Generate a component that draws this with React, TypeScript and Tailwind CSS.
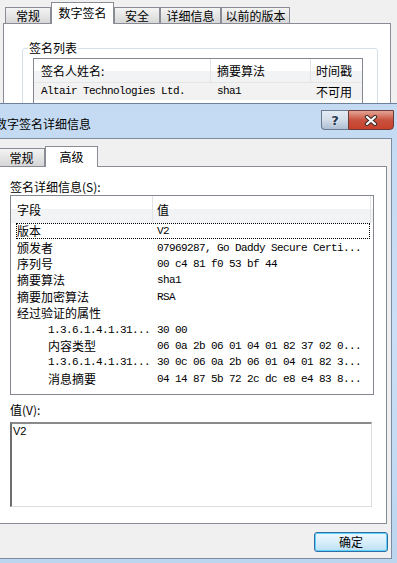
import React from "react";

const CJK = "font-['Noto_Sans_CJK_SC','Noto_Sans',sans-serif]";
const MONO = "font-['Liberation_Mono','Noto_Sans_CJK_SC',monospace] text-[11px] tracking-[-0.6px]";

function Tab({ w, label }: { w: string; label: string }) {
  return (
    <div
      className={`${w} h-[16px] border border-b-0 border-[#898c95] bg-linear-to-b from-[#f4f4f4] to-[#d8d8d8] flex items-center justify-center leading-[14px] text-[12px]`}
    >
      {label}
    </div>
  );
}

function SelTab({ w, label }: { w: string; label: string }) {
  return (
    <div
      className={`${w} relative z-10 -mb-px h-[22px] border border-b-0 border-[#898c95] bg-white flex items-start justify-center pt-[3px] leading-[14px] text-[12px]`}
    >
      {label}
    </div>
  );
}

type Row = { f: string; v: string; indent?: boolean; monoF?: boolean; sel?: boolean };

const rows: Row[] = [
  { f: "版本", v: "V2", sel: true },
  { f: "颁发者", v: "07969287, Go Daddy Secure Certi..." },
  { f: "序列号", v: "00 c4 81 f0 53 bf 44" },
  { f: "摘要算法", v: "sha1" },
  { f: "摘要加密算法", v: "RSA" },
  { f: "经过验证的属性", v: "" },
  { f: "1.3.6.1.4.1.31...", v: "30 00", indent: true, monoF: true },
  { f: "内容类型", v: "06 0a 2b 06 01 04 01 82 37 02 0...", indent: true },
  { f: "1.3.6.1.4.1.31...", v: "30 0c 06 0a 2b 06 01 04 01 82 3...", indent: true, monoF: true },
  { f: "消息摘要", v: "04 14 87 5b 72 2c dc e8 e4 83 8...", indent: true },
];

export default function App() {
  return (
    <div className={`relative w-[397px] h-[563px] overflow-hidden bg-[#f0f0f0] text-black ${CJK} text-[12px]`}>
      {/* Background property sheet */}
      <div className="pt-[2px]">
        <div className="flex items-end h-[21px] pl-[5px]">
          <Tab w="w-[46px]" label="常规" />
          <SelTab w="w-[63px]" label="数字签名" />
          <Tab w="w-[46px]" label="安全" />
          <Tab w="w-[61px]" label="详细信息" />
          <Tab w="w-[69px]" label="以前的版本" />
        </div>
        <div className="ml-[3px] w-[388px] h-[100px] border border-[#898c95] bg-white">
          <div className="relative mt-[24px] ml-[18px] w-[356px] h-[90px] border border-[#d5dfe5] rounded-[3px]">
            <div className="absolute left-[5px] top-[-9px] px-[1px] bg-white leading-[16px]">签名列表</div>
            <div className="mt-[9px] ml-[10px] w-[330px] h-[80px] border border-[#828790] bg-white">
              <div className="flex h-[24px] border-b border-[#e5e5e5] bg-linear-to-b from-white from-50% to-[#f2f3f5] to-50%">
                <div className="w-[177px] border-r border-[#e3e3e3] pl-[7px] flex items-center">签名人姓名:</div>
                <div className="w-[100px] border-r border-[#e3e3e3] pl-[6px] flex items-center">摘要算法</div>
                <div className="flex-1 pl-[5px] flex items-center">时间戳</div>
              </div>
              <div className="flex h-[17px] bg-[#f2f2f2] items-center">
                <div className={`w-[177px] pl-[7px] ${MONO}`}>Altair Technologies Ltd.</div>
                <div className={`w-[100px] pl-[6px] ${MONO}`}>sha1</div>
                <div className="flex-1 pl-[5px]">不可用</div>
              </div>
            </div>
          </div>
        </div>
      </div>

      {/* Dialog window */}
      <div className="absolute left-0 top-[103px] w-[397px] h-[460px] border-t border-[#6f8199] bg-linear-to-b from-[#c3daf2] via-[#cbe0f6] to-[#bcd6f0]">
        <div className="flex items-start h-[34px]">
          <div className="ml-[-5px] mt-[12px] leading-[16px] text-[12px] tracking-[0px]">数字签名详细信息</div>
          <div className="ml-auto mt-[6px] mr-[3px] flex">
            <div className="w-[27px] h-[20px] rounded-bl-[4px] border border-r-0 border-[#6b7a8e] bg-linear-to-b from-[#e3ebf4] via-[#d2dde9] to-[#aebfd3] flex items-center justify-center">
              <span className="font-['DejaVu_Sans',sans-serif] font-bold text-[13px] leading-[13px] text-[#263850] [text-shadow:0_0_2px_#ffffff]">?</span>
            </div>
            <div className="w-[46px] h-[20px] rounded-br-[4px] border border-[#6e3a35] bg-linear-to-b from-[#e3a396] via-[#c8523f] to-[#c8402b] flex items-center justify-center">
              <svg width="14" height="11" viewBox="0 0 14 11">
                <path d="M3 2 L11 9 M11 2 L3 9" stroke="#3a2a28" strokeWidth="4.2" strokeLinecap="round" />
                <path d="M3 2 L11 9 M11 2 L3 9" stroke="#ffffff" strokeWidth="2.2" strokeLinecap="round" />
              </svg>
            </div>
          </div>
        </div>

        <div className="w-[392px] h-[421px] bg-[#f0f0f0] border-t border-r border-b border-[#7d8ca0] flex flex-col">
          {/* tabs */}
          <div className="flex items-end h-[27px] pt-[7px] ml-[-2px]">
            <div className="w-[47px] h-[18px] border border-b-0 border-[#898c95] bg-linear-to-b from-[#f4f4f4] to-[#d6d6d6] flex items-center justify-center leading-[14px]">常规</div>
            <div className="relative z-10 -mb-px w-[53px] h-[21px] border border-b-0 border-[#898c95] bg-white flex items-start justify-center pt-[3px] leading-[14px]">高级</div>
          </div>
          {/* panel */}
          <div className="ml-[-1px] w-[388px] h-[358px] border border-[#898c95] bg-white pl-[10px] pt-[12px]">
            <div className="leading-[16px] h-[16px]">签名详细信息(S):</div>
            <div className="w-[364px] h-[200px] border border-[#828790] bg-white">
              <div className="flex h-[27px] bg-linear-to-b from-white from-50% to-[#f2f3f5] to-50%">
                <div className="w-[142px] border-r border-[#e3e3e3] pl-[6px] flex items-center">字段</div>
                <div className="w-[218px] border-r border-[#e3e3e3] pl-[4px] flex items-center">值</div>
                <div className="flex-1" />
              </div>
              <div className="flex flex-col">
                {rows.map((r, i) => (
                  <div
                    key={i}
                    className={`ml-[5px] mr-[3px] h-[16.4px] flex items-center ${
                      r.sel ? "outline-1 outline-dotted outline-black -outline-offset-1" : ""
                    }`}
                  >
                    <div
                      className={`w-[136px] ${r.indent ? "pl-[32px]" : "pl-[1px]"} ${
                        r.monoF ? MONO : "text-[12px]"
                      } leading-[16px] whitespace-nowrap`}
                    >
                      {r.f}
                    </div>
                    <div className={`pl-[5px] ${MONO} leading-[16px] whitespace-nowrap`}>{r.v}</div>
                  </div>
                ))}
              </div>
            </div>
            <div className="mt-[7px] leading-[16px] h-[16px]">值(V):</div>
            <div className="mt-[4px] w-[362px] h-[85px] border-t-2 border-l-2 border-r border-b border-t-[#8a8a8a] border-l-[#6e6e6e] border-r-[#dedede] border-b-[#dedede] bg-white pl-[1px] pt-[1px]">
              <div className="font-['Liberation_Sans',sans-serif] text-[11px] leading-[13px]">V2</div>
            </div>
          </div>
          {/* button row */}
          <div className="flex justify-end pr-[3px] pt-[8px]">
            <div className="w-[74px] h-[20px] rounded-[3px] border border-[#2f6ea0] shadow-[inset_0_0_0_1px_#5fd0ff] bg-linear-to-b from-[#ecf7fd] via-[#d9effb] to-[#b9e0f5] flex items-center justify-center leading-[14px]">
              确定
            </div>
          </div>
        </div>
      </div>
    </div>
  );
}
